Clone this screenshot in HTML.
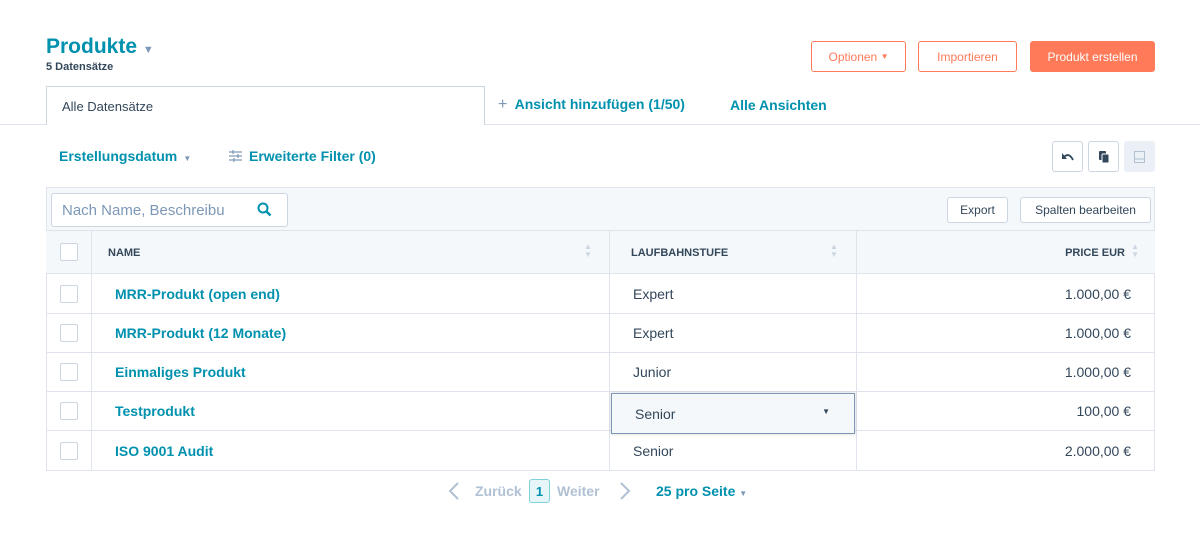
<!DOCTYPE html>
<html><head><meta charset="utf-8"><style>
*{box-sizing:border-box;margin:0;padding:0}
body{width:1200px;height:546px;background:#fff;font-family:"Liberation Sans",sans-serif;color:#33475b;position:relative;overflow:hidden}
.a{position:absolute}
.teal{color:#0091ae;font-weight:bold}
.btn{position:absolute;border:1px solid #ff7a59;border-radius:3px;color:#ff7a59;font-size:12px;display:flex;align-items:center;justify-content:center;background:#fff}
.ib{position:absolute;top:141px;width:31px;height:31px;border:1px solid #cbd6e2;border-radius:3px;background:#fff;display:flex;align-items:center;justify-content:center}
.wb{position:absolute;background:#fff;border:1px solid #cbd6e2;border-radius:3px;font-size:12px;display:flex;align-items:center;justify-content:center;height:26px;top:197px}
.row{position:absolute;left:46px;width:1109px;height:40px;border-bottom:1px solid #dfe3eb;font-size:14px}
.cb{position:absolute;left:14px;top:11px;width:18px;height:18px;border:1px solid #cbd6e2;border-radius:2px;background:#fff}
.c1{position:absolute;left:69px;top:12px;color:#0091ae;font-weight:bold;font-size:14px}
.c2{position:absolute;left:587px;top:12px}
.c3{position:absolute;right:24px;top:12px}
.v{position:absolute;top:0;bottom:0;width:1px;background:#dfe3eb}
</style></head><body>
<div class="a teal" style="left:46px;top:35px;font-size:21px">Produkte <span style="color:#7c98b6;font-size:11px">▼</span></div>
<div class="a" style="left:46px;top:61px;font-size:11px;font-weight:bold">5 Datensätze</div>
<div class="btn" style="left:811px;top:41px;width:95px;height:31px">Optionen&nbsp;<span style="font-size:8px">▼</span></div>
<div class="btn" style="left:918px;top:41px;width:99px;height:31px">Importieren</div>
<div class="btn" style="left:1030px;top:41px;width:125px;height:31px;background:#ff7a59;color:#fff">Produkt erstellen</div>
<div class="a" style="left:0;top:124px;width:1200px;height:1px;background:#dfe3eb"></div>
<div class="a" style="left:46px;top:86px;width:439px;height:39px;border:1px solid #cbd6e2;border-bottom:none;background:#fff;font-size:13px;padding:12px 0 0 15px">Alle Datensätze</div>
<div class="a teal" style="left:498px;top:96px;font-size:14px"><span style="font-weight:normal;font-size:16px;color:#7c98b6">+</span>&nbsp; Ansicht hinzufügen (1/50)</div>
<div class="a teal" style="left:730px;top:97px;font-size:14px">Alle Ansichten</div>
<div class="a teal" style="left:59px;top:148px;font-size:14px">Erstellungsdatum <span style="color:#7c98b6;font-size:8px;font-weight:normal">&nbsp;▼</span></div>
<svg class="a" style="left:229px;top:150px" width="13" height="12" viewBox="0 0 13 12"><g stroke="#7c98b6" stroke-width="1.2"><line x1="0" y1="2" x2="13" y2="2"/><line x1="0" y1="6" x2="13" y2="6"/><line x1="0" y1="10" x2="13" y2="10"/><line x1="4" y1="0" x2="4" y2="4"/><line x1="9" y1="4" x2="9" y2="8"/><line x1="5" y1="8" x2="5" y2="12"/></g></svg>
<div class="a teal" style="left:249px;top:148px;font-size:14px">Erweiterte Filter (0)</div>
<div class="ib" style="left:1052px"><svg width="14" height="10" viewBox="0 0 14 10"><path d="M1 1 L1 7 L6 7 Z" fill="#33475b"/><path d="M3 5 Q8 0 12 8" fill="none" stroke="#33475b" stroke-width="1.8"/></svg></div>
<div class="ib" style="left:1088px"><svg width="10" height="12" viewBox="0 0 10 12"><rect x="0" y="0" width="7" height="9" rx="1" fill="#33475b"/><rect x="3" y="3" width="7" height="9" rx="1" fill="#33475b" stroke="#fff"/></svg></div>
<div class="ib" style="left:1124px;background:#eaf0f6;border-color:#eaf0f6"><svg width="11" height="12" viewBox="0 0 11 12"><rect x="0.5" y="0.5" width="10" height="11" fill="none" stroke="#b0c1d4"/><line x1="0" y1="8" x2="11" y2="8" stroke="#b0c1d4"/></svg></div>
<div class="a" style="left:46px;top:187px;width:1109px;height:284px;border:1px solid #dfe3eb"></div>
<div class="a" style="left:47px;top:188px;width:1107px;height:43px;background:#f5f8fa;border-bottom:1px solid #dfe3eb"></div>
<div class="a" style="left:51px;top:193px;width:237px;height:34px;border:1px solid #cbd6e2;border-radius:3px;background:#fff;font-size:15px;color:#7c98b6;padding:8px 0 0 10px">Nach Name, Beschreibu</div>
<svg class="a" style="left:257px;top:202px" width="15" height="15" viewBox="0 0 15 15"><circle cx="6" cy="6" r="4.5" fill="none" stroke="#0091ae" stroke-width="2"/><line x1="9.5" y1="9.5" x2="13.5" y2="13.5" stroke="#0091ae" stroke-width="2.4"/></svg>
<div class="wb" style="left:947px;width:61px">Export</div>
<div class="wb" style="left:1020px;width:131px">Spalten bearbeiten</div>
<div class="row" style="top:231px;height:43px;background:#f5f8fa;font-size:11px;font-weight:bold">
<div class="cb" style="top:12px"></div>
<div class="a" style="left:62px;top:16px">NAME</div>
<div class="a" style="left:585px;top:16px">LAUFBAHNSTUFE</div>
<div class="a" style="right:30px;top:16px">PRICE EUR</div>
<div class="a" style="left:538px;top:12px;color:#cbd6e2;font-size:8px;line-height:8px">▲<br>▼</div>
<div class="a" style="left:784px;top:12px;color:#cbd6e2;font-size:8px;line-height:8px">▲<br>▼</div>
<div class="a" style="right:16px;top:12px;color:#cbd6e2;font-size:8px;line-height:8px">▲<br>▼</div>
<div class="v" style="left:45px"></div><div class="v" style="left:563px"></div><div class="v" style="left:810px"></div>
</div>
<div class="row" style="top:274px"><div class="cb"></div><div class="c1">MRR-Produkt (open end)</div><div class="c2">Expert</div><div class="c3">1.000,00 €</div><div class="v" style="left:45px"></div><div class="v" style="left:563px"></div><div class="v" style="left:810px"></div></div>
<div class="row" style="top:313px"><div class="cb"></div><div class="c1">MRR-Produkt (12 Monate)</div><div class="c2">Expert</div><div class="c3">1.000,00 €</div><div class="v" style="left:45px"></div><div class="v" style="left:563px"></div><div class="v" style="left:810px"></div></div>
<div class="row" style="top:352px"><div class="cb"></div><div class="c1">Einmaliges Produkt</div><div class="c2">Junior</div><div class="c3">1.000,00 €</div><div class="v" style="left:45px"></div><div class="v" style="left:563px"></div><div class="v" style="left:810px"></div></div>
<div class="row" style="top:391px"><div class="cb"></div><div class="c1">Testprodukt</div><div class="c3">100,00 €</div><div class="v" style="left:45px"></div><div class="v" style="left:563px"></div><div class="v" style="left:810px"></div></div>
<div class="row" style="top:431px;border-bottom:none"><div class="cb"></div><div class="c1">ISO 9001 Audit</div><div class="c2">Senior</div><div class="c3">2.000,00 €</div><div class="v" style="left:45px"></div><div class="v" style="left:563px"></div><div class="v" style="left:810px"></div></div>
<div class="a" style="left:611px;top:393px;width:244px;height:41px;background:#f5f8fa;border:1px solid #7c98b6;box-shadow:0 0 3px rgba(0,0,0,.2);font-size:14px;padding:12px 0 0 23px">Senior<span style="position:absolute;right:24px;top:13px;font-size:8px">▼</span></div>
<svg class="a" style="left:448px;top:481px" width="12" height="20" viewBox="0 0 12 20"><path d="M10 2 L2 10 L10 18" fill="none" stroke="#b0c1d4" stroke-width="2"/></svg>
<div class="a" style="left:475px;top:483px;font-size:14px;font-weight:bold;color:#b0c1d4">Zurück</div>
<div class="a" style="left:529px;top:479px;width:21px;height:24px;border:1px solid #7fd1de;background:#e5f5f8;border-radius:3px;font-size:13px;font-weight:bold;color:#0091ae;text-align:center;padding-top:4px">1</div>
<div class="a" style="left:557px;top:483px;font-size:14px;font-weight:bold;color:#b0c1d4">Weiter</div>
<svg class="a" style="left:619px;top:481px" width="12" height="20" viewBox="0 0 12 20"><path d="M2 2 L10 10 L2 18" fill="none" stroke="#b0c1d4" stroke-width="2"/></svg>
<div class="a teal" style="left:656px;top:483px;font-size:14px">25 pro Seite <span style="color:#7c98b6;font-size:8px;font-weight:normal">▼</span></div>
</body></html>
